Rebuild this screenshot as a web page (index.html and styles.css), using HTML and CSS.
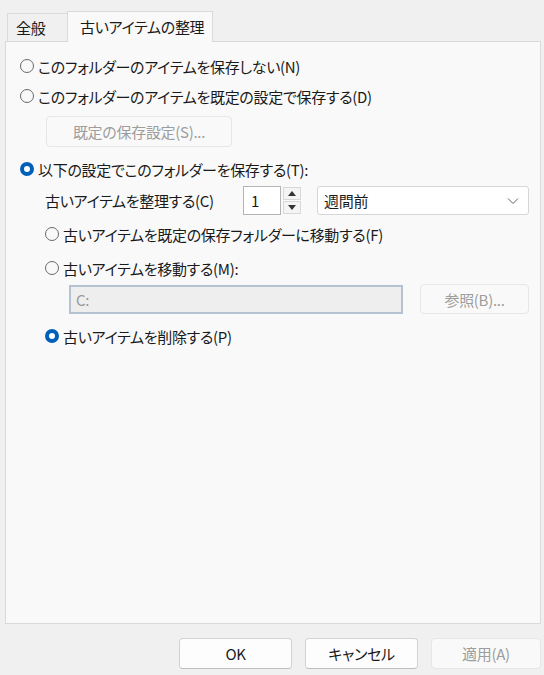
FILE: index.html
```html
<!DOCTYPE html>
<html lang="ja">
<head>
    <meta charset="UTF-8">
    <title>古いアイテムの整理</title>
    <link rel="stylesheet" href="styles.css">
</head>
<body>
<div class="dialog">
    <div class="tabs">
        <div class="tab">全般</div>
        <div class="tab active">古いアイテムの整理</div>
    </div>
    <div class="panel">
        <label class="row">
            <span class="radio"></span>
            <span>このフォルダーのアイテムを保存しない(N)</span>
        </label>
        <label class="row">
            <span class="radio"></span>
            <span>このフォルダーのアイテムを既定の設定で保存する(D)</span>
        </label>
        <div class="btn disabled btn-defaults">既定の保存設定(S)...</div>
        <label class="row row-main">
            <span class="radio checked"></span>
            <span>以下の設定でこのフォルダーを保存する(T):</span>
        </label>
        <div class="sub">
            <div class="organize">
                <span class="organize-label">古いアイテムを整理する(C)</span>
                <div class="spin-box">1</div>
                <div class="spin-btns">
                    <div class="spin-btn"><span class="arrow-up"></span></div>
                    <div class="spin-btn"><span class="arrow-down"></span></div>
                </div>
                <div class="select">
                    <span>週間前</span>
                    <svg class="chevron" width="12" height="8" viewBox="0 0 12 8">
                        <path d="M1 1.5 L6 6.5 L11 1.5" fill="none" stroke="#606060" stroke-width="1"/>
                    </svg>
                </div>
            </div>
            <label class="row">
                <span class="radio"></span>
                <span>古いアイテムを既定の保存フォルダーに移動する(F)</span>
            </label>
            <label class="row">
                <span class="radio"></span>
                <span>古いアイテムを移動する(M):</span>
            </label>
            <div class="path-row">
                <div class="path-input">C:</div>
                <div class="btn disabled btn-browse">参照(B)...</div>
            </div>
            <label class="row row-delete">
                <span class="radio checked"></span>
                <span>古いアイテムを削除する(P)</span>
            </label>
        </div>
    </div>
    <div class="footer">
        <div class="btn">OK</div>
        <div class="btn">キャンセル</div>
        <div class="btn disabled btn-apply">適用(A)</div>
    </div>
</div>
</body>
</html>
```

FILE: styles.css
```css
body {
    margin: 0;
    background: #f0f0f0;
    font-family: "Noto Sans CJK JP", "Noto Sans", sans-serif;
    font-size: 15px;
    font-feature-settings: "palt";
    letter-spacing: -0.3px;
    color: #1a1a1a;
}

.dialog {
    width: 544px;
    height: 675px;
}

.tabs {
    display: flex;
    align-items: flex-end;
    height: 41px;
    padding-left: 7px;
}

.tab {
    box-sizing: border-box;
    height: 28px;
    padding: 0 8px;
    width: 61px;
    border: 1px solid #dadada;
    border-bottom: none;
    background: #f0f0f0;
    line-height: 27px;
    white-space: nowrap;
}

.tab.active {
    width: 146px;
    height: 31px;
    margin-left: -1px;
    padding-left: 12px;
    background: #f9f9f9;
    position: relative;
    top: 1px;
    line-height: 29px;
}

.panel {
    box-sizing: border-box;
    width: 536px;
    height: 583px;
    margin-left: 5px;
    padding: 9px 0 0 14px;
    background: #f9f9f9;
    border: 1px solid #dadada;
}

.row {
    display: flex;
    align-items: center;
    height: 30px;
    gap: 4px;
}

.radio {
    box-sizing: border-box;
    width: 14px;
    height: 14px;
    border: 1px solid #6a6a6a;
    border-radius: 50%;
    background: #f9f9f9;
    flex-shrink: 0;
}

.radio.checked {
    border: 4px solid #005fb8;
    background: #ffffff;
}

.btn {
    box-sizing: border-box;
    width: 113px;
    height: 31px;
    display: flex;
    align-items: center;
    justify-content: center;
    background: #fdfdfd;
    border: 1px solid #d3d3d3;
    border-bottom-color: #bdbdbd;
    border-radius: 4px;
    color: #1a1a1a;
}

.btn.disabled {
    background: #f9f9f9;
    border-color: #e6e6e6;
    color: #9d9d9d;
}

.btn-defaults {
    width: 186px;
    height: 31px;
    margin: 5px 0 0 26px;
}

.row-main {
    margin-top: 7px;
}

.sub {
    padding-left: 25px;
}

.organize {
    display: flex;
    align-items: center;
    height: 29px;
    margin-top: 2px;
}

.organize-label {
    width: 198px;
}

.spin-box {
    box-sizing: border-box;
    width: 38px;
    height: 29px;
    padding-left: 7px;
    background: #ffffff;
    border: 1px solid #b4b4b4;
    line-height: 27px;
}

.spin-btns {
    display: flex;
    flex-direction: column;
    gap: 1px;
    margin: 0 16px 0 2px;
}

.spin-btn {
    box-sizing: border-box;
    width: 18px;
    height: 13px;
    background: #f4f4f4;
    border: 1px solid #d8d8d8;
    display: flex;
    align-items: center;
    justify-content: center;
}

.arrow-up {
    border-left: 4px solid transparent;
    border-right: 4px solid transparent;
    border-bottom: 5px solid #333;
}

.arrow-down {
    border-left: 4px solid transparent;
    border-right: 4px solid transparent;
    border-top: 5px solid #333;
}

.select {
    box-sizing: border-box;
    width: 212px;
    height: 29px;
    display: flex;
    align-items: center;
    justify-content: space-between;
    padding: 0 9px 0 6px;
    background: #ffffff;
    border: 1px solid #d6d6d6;
    border-radius: 3px;
}

.sub .row {
    margin-top: 4px;
}

.path-row {
    display: flex;
    align-items: center;
    gap: 17px;
    margin: 1px 0 0 24px;
}

.path-input {
    box-sizing: border-box;
    width: 334px;
    height: 29px;
    padding-left: 5px;
    background: #eeeeee;
    border: 2px solid #b4c2d2;
    color: #9a9a9a;
    line-height: 25px;
}

.btn-browse {
    width: 109px;
    height: 30px;
}

.sub .row-delete {
    margin-top: 7px;
}

.footer {
    display: flex;
    justify-content: flex-end;
    gap: 13px;
    padding: 14px 3px 0 0;
}

.btn-apply {
    width: 110px;
}
```
